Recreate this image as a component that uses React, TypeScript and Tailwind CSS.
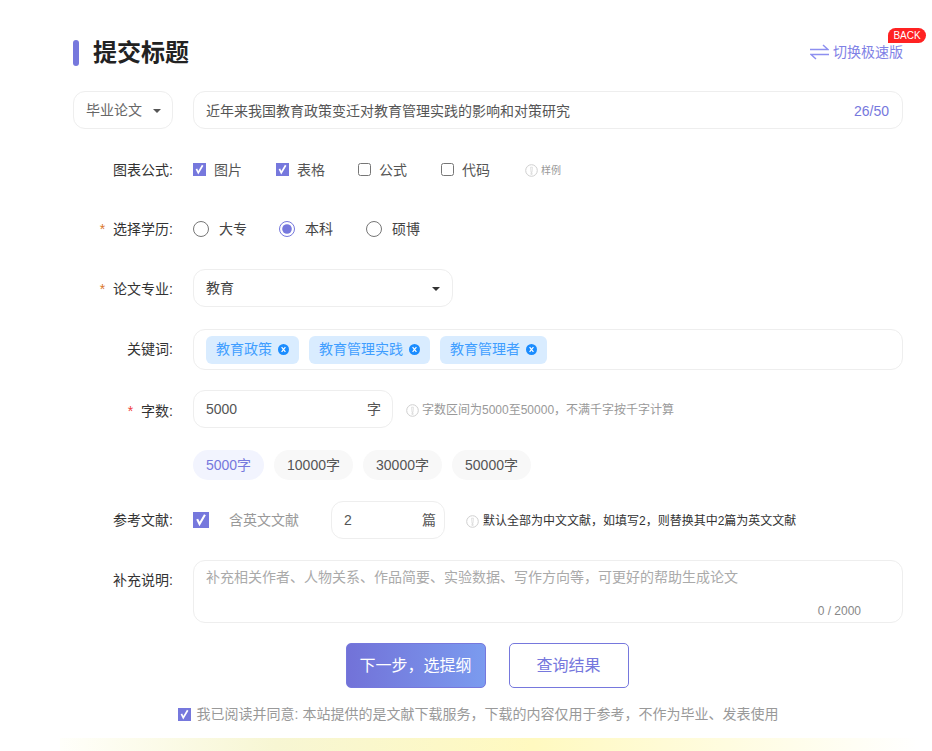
import { ReactNode } from 'react';

const FONT = "font-['Liberation_Sans','Noto_Sans_CJK_SC',sans-serif]";

function InfoIcon({ className = '' }: { className?: string }) {
  return (
    <svg className={className} width="13" height="13" viewBox="0 0 13 13" fill="none">
      <circle cx="6.5" cy="6.5" r="5.8" stroke="#cfcfcf" />
      <path d="M5.6 3.2h1.8L7 8.4H6zM5.9 9.2h1.2v1.2H5.9z" stroke="#cfcfcf" strokeWidth="0.6" />
    </svg>
  );
}

function Caret({ color = '#555' }: { color?: string }) {
  return (
    <svg width="8" height="4" viewBox="0 0 8 4">
      <path d="M0 0h8L4 4z" fill={color} />
    </svg>
  );
}

// the checked boxes in the picture are flat squares with a thin tick
function Ticked({ size = 13, className = '' }: { size?: number; className?: string }) {
  return (
    <svg className={className} width={size} height={size} viewBox="0 0 13 13">
      <rect width="13" height="13" fill="#7678dd" />
      <path d="M3.4 5.8l1.9 4 4.4-7.6" fill="none" stroke="#fff" strokeWidth="1.7" />
    </svg>
  );
}

function Row({
  label,
  required,
  className = '',
  labelClass = '',
  children,
}: {
  label?: string;
  required?: 'orange' | 'red';
  className?: string;
  labelClass?: string;
  children: ReactNode;
}) {
  return (
    <div className={`flex items-center ${className}`}>
      <div className={`mr-[20px] w-[100px] shrink-0 text-right text-[14px] leading-[20px] text-[#333] ${labelClass}`}>
        {required === 'orange' && <span className="mr-[8px] text-[#d9782e]">*</span>}
        {required === 'red' && <span className="mr-[8px] text-[#f04040]">*</span>}
        {label}
      </div>
      {children}
    </div>
  );
}

function Check({ label, checked, className = '' }: { label: string; checked?: boolean; className?: string }) {
  return (
    <label className={`flex items-center text-[14px] text-[#555] ${className}`}>
      {checked ? (
        <Ticked className="mb-[2px] mr-[8px]" />
      ) : (
        <input type="checkbox" className="m-0 mb-[2px] mr-[8px] h-[13px] w-[13px] accent-[#7678dd]" />
      )}
      {label}
    </label>
  );
}

function Radio({ label, checked, className = '' }: { label: string; checked?: boolean; className?: string }) {
  return (
    <label className={`flex items-center text-[14px] text-[#444] ${className}`}>
      <input
        type="radio"
        name="edu"
        defaultChecked={checked}
        className="m-0 mr-[10px] h-[16px] w-[16px] accent-[#7678dd]"
      />
      {label}
    </label>
  );
}

function Tag({ text }: { text: string }) {
  return (
    <span className="flex h-[28px] items-center rounded-[6px] bg-[#d9ecff] px-[10px] text-[14px] text-[#409eff]">
      {text}
      <svg className="ml-[6px]" width="11" height="11" viewBox="0 0 11 11">
        <circle cx="5.5" cy="5.5" r="5.5" fill="#1a8cff" />
        <path d="M3.6 3.2l3.8 4.6M7.4 3.2L3.6 7.8" stroke="#fff" strokeWidth="1.2" />
      </svg>
    </span>
  );
}

function Pill({ text, active, className = '' }: { text: string; active?: boolean; className?: string }) {
  return (
    <span
      className={`flex h-[30px] items-center justify-center rounded-full text-[14px] ${
        active ? 'bg-[#f2f4fe] text-[#7678dd]' : 'bg-[#f8f8f8] text-[#555]'
      } ${className}`}
    >
      {text}
    </span>
  );
}

export default function App() {
  return (
    <div className={`relative h-[751px] w-[932px] overflow-hidden bg-white ${FONT}`}>
      <div className="ml-[73px] w-[830px] pt-[39px]">
        {/* Header */}
        <div className="flex h-[28px] items-center justify-between">
          <div className="flex items-center">
            <span className="h-[26px] w-[6px] rounded-[3px] bg-[#7678dd]" />
            <h1 className="ml-[14px] text-[24px] font-bold leading-[28px] text-[#222]">提交标题</h1>
          </div>
          <div className="flex items-center pb-[2px] text-[14px] text-[#7f82e6]">
            <svg className="mr-[4px]" width="19" height="16" viewBox="0 0 19 16" fill="none" stroke="#8d8ff0" strokeWidth="1.5">
              <path d="M0 5.5h18L13 1" />
              <path d="M19 10.5H1L6 15" />
            </svg>
            切换极速版
          </div>
        </div>

        {/* Title */}
        <div className="mt-[24px] flex h-[38px]">
          <div className="flex w-[100px] items-center justify-between rounded-[12px] border border-[#eeeeee] pl-[12px] pr-[11px] pt-[1px] text-[14px] text-[#666]">
            毕业论文
            <Caret />
          </div>
          <div className="ml-[20px] flex flex-1 items-center justify-between rounded-[12px] border border-[#eeeeee] pl-[12px] pr-[13px] pt-[2px] text-[14px] text-[#555]">
            近年来我国教育政策变迁对教育管理实践的影响和对策研究
            <span className="text-[#7678dd]">26/50</span>
          </div>
        </div>

        <Row label="图表公式:" className="mt-[31px] h-[20px]">
          <Check label="图片" checked className="w-[83px]" />
          <Check label="表格" checked className="w-[82px]" />
          <Check label="公式" className="w-[83px]" />
          <Check label="代码" className="w-[84px]" />
          <span className="flex items-center text-[10px] text-[#999]">
            <InfoIcon className="mr-[3px]" />
            样例
          </span>
        </Row>

        <Row label="选择学历:" required="orange" className="mt-[39px] h-[20px]">
          <Radio label="大专" className="w-[86px]" />
          <Radio label="本科" checked className="w-[87px]" />
          <Radio label="硕博" />
        </Row>

        <Row label="论文专业:" required="orange" labelClass="pt-[2px]" className="mt-[30px]">
          <div className="flex h-[38px] w-[260px] items-center justify-between rounded-[12px] border border-[#eeeeee] pl-[12px] pr-[12px] pt-[1px] text-[14px] text-[#444]">
            教育
            <Caret color="#333" />
          </div>
        </Row>

        <Row label="关键词:" labelClass="pb-[2px]" className="mt-[22px]">
          <div className="flex h-[41px] flex-1 items-center gap-[10px] rounded-[12px] border border-[#eeeeee] pl-[12px]">
            <Tag text="教育政策" />
            <Tag text="教育管理实践" />
            <Tag text="教育管理者" />
          </div>
        </Row>

        <Row label="字数:" required="red" labelClass="pt-[3px]" className="mt-[20px]">
          <div className="flex h-[38px] w-[200px] items-center justify-between rounded-[12px] border border-[#eeeeee] pl-[12px] pr-[11px] text-[14px] text-[#555]">
            5000
            <span>字</span>
          </div>
          <span className="ml-[13px] flex items-center pt-[2px] text-[12px] text-[#999]">
            <InfoIcon className="mr-[3px]" />
            字数区间为5000至50000，不满千字按千字计算
          </span>
        </Row>

        <div className="ml-[120px] mt-[22px] flex gap-[10px]">
          <Pill text="5000字" active className="w-[71px]" />
          <Pill text="10000字" className="w-[79px]" />
          <Pill text="30000字" className="w-[79px]" />
          <Pill text="50000字" className="w-[79px]" />
        </div>

        <Row label="参考文献:" className="mt-[21px]">
          <Ticked size={16} />
          <span className="ml-[20px] w-[102px] text-[14px] text-[#999]">含英文文献</span>
          <div className="flex h-[38px] w-[114px] items-center justify-between rounded-[12px] border border-[#eeeeee] pl-[12px] pr-[8px] text-[14px] text-[#555]">
            2
            <span>篇</span>
          </div>
          <span className="ml-[21px] flex items-center pt-[2px] text-[12px] text-[#333]">
            <InfoIcon className="mr-[4px]" />
            默认全部为中文文献，如填写2，则替换其中2篇为英文文献
          </span>
        </Row>

        <div className="mt-[21px] flex">
          <div className="mr-[20px] mt-[10px] w-[100px] shrink-0 text-right text-[14px] leading-[20px] text-[#333]">
            补充说明:
          </div>
          <div className="relative h-[63px] flex-1 rounded-[12px] border border-[#eeeeee] px-[12px] pt-[6px] text-[14px] leading-[20px] text-[#aaa]">
            补充相关作者、人物关系、作品简要、实验数据、写作方向等，可更好的帮助生成论文
            <span className="absolute bottom-[3px] right-[41px] text-[12px] leading-[16px] text-[#888]">0 / 2000</span>
          </div>
        </div>

        {/* Actions */}
        <div className="mt-[20px] flex justify-center gap-[23px] pr-[2px]">
          <button className="h-[45px] w-[140px] rounded-[5px] border border-[#7678dd] bg-gradient-to-r from-[#7272d8] to-[#7b9bef] text-[16px] text-white">
            下一步，选提纲
          </button>
          <button className="h-[45px] w-[120px] rounded-[5px] border border-[#7678dd] bg-white text-[16px] text-[#7678dd]">
            查询结果
          </button>
        </div>

        <label className="mt-[16px] flex items-center justify-center pr-[20px] text-[14px] text-[#999]">
          <Ticked className="mr-[6px]" />
          我已阅读并同意: 本站提供的是文献下载服务，下载的内容仅用于参考，不作为毕业、发表使用
        </label>
      </div>

      {/* Footer glow */}
      <div className="absolute bottom-0 left-[60px] h-[13px] w-[860px] bg-[linear-gradient(90deg,#fffffa_0%,#f7f6d3_25%,#fff9c0_55%,#ffffff_100%)]" />

      {/* Badge */}
      <span className="absolute left-[888px] top-[28px] flex h-[15px] w-[38px] items-center justify-center rounded-full rounded-bl-none bg-[#ff2222] text-[10px] leading-none text-white">
        BACK
      </span>
    </div>
  );
}
